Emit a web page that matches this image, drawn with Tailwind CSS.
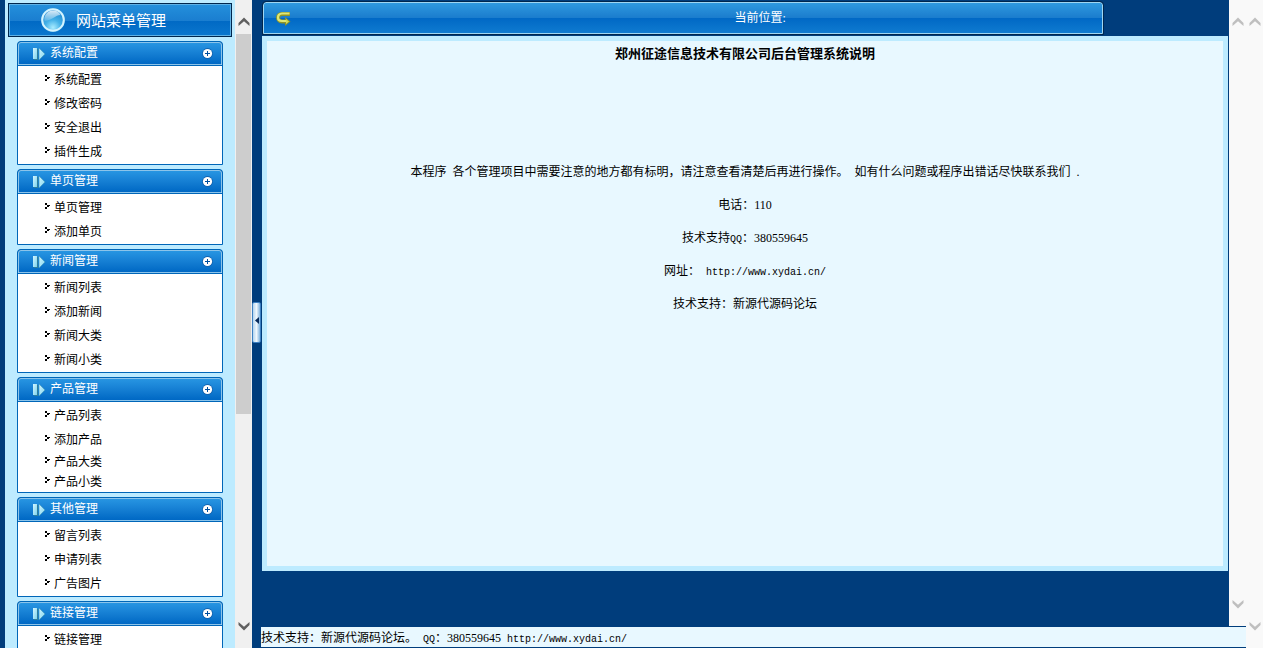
<!DOCTYPE html>
<html lang="zh-CN">
<head>
<meta charset="utf-8">
<meta name="viewport" content="width=device-width, initial-scale=1">
<title>网站菜单管理</title>
<script src="https://cdn.jsdelivr.net/npm/@tailwindcss/browser@4"></script>
</head>
<body class="flex h-screen overflow-hidden bg-[#003d7c] font-['Liberation_Serif','Noto_Sans_CJK_SC',serif] text-xs text-black">
<svg class="absolute size-0" aria-hidden="true">
  <defs>
    <linearGradient id="ice" x1="0" y1="0" x2="1" y2="1"><stop offset="0" stop-color="#d2f6ff"/><stop offset="1" stop-color="#7fd3ee"/></linearGradient>
    <radialGradient id="orb" cx=".5" cy=".85" r=".8"><stop offset="0" stop-color="#a9ecff"/><stop offset=".45" stop-color="#45b2e8"/><stop offset="1" stop-color="#1d86cf"/></radialGradient>
    <linearGradient id="shine" x1="0" y1="0" x2="0" y2="1"><stop offset="0" stop-color="#fff" stop-opacity=".85"/><stop offset="1" stop-color="#fff" stop-opacity=".15"/></linearGradient>
    <symbol id="play" viewBox="0 0 13 14"><path d="M1 2h4v11H1z" fill="#2f7f9c"/><path d="M0 1h4v11H0z" fill="url(#ice)"/><path d="M6 1v12l6-6z" fill="url(#ice)" stroke="#3f97b8" stroke-width=".6"/></symbol>
    <symbol id="plus" viewBox="0 0 11 11"><circle cx="5.500" cy="5.500" r="5.400" fill="#1262ae"/><circle cx="5.500" cy="5.500" r="4.600" fill="#fff"/><path d="M5 3h1v2h2v1H6v2H5V6H3V5h2z" fill="#004f9e"/></symbol>
    <symbol id="dot" viewBox="0 0 5 6"><path d="M0 0h2v2H0zM2 2h3v1H4v1H2zM0 4h2v2H0z" fill="#000"/></symbol>
    <symbol id="up" viewBox="0 0 12 9"><path d="M0.500 6 6 .5 11.500 6v3L6 4.200.5 9z" fill="currentColor"/></symbol>
    <symbol id="down" viewBox="0 0 12 9"><path d="M0.500 3 6 8.500 11.500 3V0L6 4.800.5 0z" fill="currentColor"/></symbol>
  </defs>
</svg>

<aside class="ml-[5px] flex w-[247px] shrink-0 bg-[#bdebff]">
  <div class="min-w-0 flex-1 overflow-hidden pt-[3px]">
    <h1 class="mx-[3px] flex h-[34px] items-center gap-[10px] border border-[#00264d] bg-[linear-gradient(#2490dc,#1a7ed0_52%,#0069c4_52%,#0b77ce)] pb-px pl-[31px] font-['Noto_Sans_CJK_SC',sans-serif] text-[15px] text-white outline-1 -outline-offset-2 outline-[#5fb0e4]">
      <svg class="size-[26px]" viewBox="0 0 26 26"><circle cx="13" cy="13" r="12" fill="#3b9fd9"/><circle cx="13" cy="13" r="10.800" fill="url(#orb)" stroke="#d4f4ff" stroke-width="2"/><path d="M4.500 14C3.500 8 8 3.500 13 3.500c4 0 6.500 2 7.500 4.500-5 0-8 5-16 6z" fill="url(#shine)"/></svg>
      网站菜单管理
    </h1>
    <nav class="mx-3 mt-1 flex flex-col gap-1">
      <section class="rounded-t-[4px] border border-[#0066b8] bg-white">
        <h2 class="flex h-[23px] items-center rounded-t-[3px] border border-[#8cc4ea] bg-linear-to-b from-[#2795e2] to-[#0068c4] pr-2 pl-[14px] text-white outline-1 outline-[#0066b8]"><svg class="mr-1 h-[14px] w-[13px]"><use href="#play"/></svg><span class="flex-1 pb-[2px]">系统配置</span><button aria-label="展开系统配置"><svg class="size-[11px]"><use href="#plus"/></svg></button></h2>
        <ul class="pt-[3px] *:flex *:h-6 *:items-center *:gap-[4px] *:pl-[27px]">
          <li><svg class="mb-1 h-[6px] w-[5px]"><use href="#dot"/></svg><a href="#">系统配置</a></li>
          <li><svg class="mb-1 h-[6px] w-[5px]"><use href="#dot"/></svg><a href="#">修改密码</a></li>
          <li><svg class="mb-1 h-[6px] w-[5px]"><use href="#dot"/></svg><a href="#">安全退出</a></li>
          <li><svg class="mb-1 h-[6px] w-[5px]"><use href="#dot"/></svg><a href="#">插件生成</a></li>
        </ul>
      </section>
      <section class="rounded-t-[4px] border border-[#0066b8] bg-white">
        <h2 class="flex h-[23px] items-center rounded-t-[3px] border border-[#8cc4ea] bg-linear-to-b from-[#2795e2] to-[#0068c4] pr-2 pl-[14px] text-white outline-1 outline-[#0066b8]"><svg class="mr-1 h-[14px] w-[13px]"><use href="#play"/></svg><span class="flex-1 pb-[2px]">单页管理</span><button aria-label="展开单页管理"><svg class="size-[11px]"><use href="#plus"/></svg></button></h2>
        <ul class="pt-[3px] *:flex *:h-6 *:items-center *:gap-[4px] *:pl-[27px]">
          <li><svg class="mb-1 h-[6px] w-[5px]"><use href="#dot"/></svg><a href="#">单页管理</a></li>
          <li><svg class="mb-1 h-[6px] w-[5px]"><use href="#dot"/></svg><a href="#">添加单页</a></li>
        </ul>
      </section>
      <section class="rounded-t-[4px] border border-[#0066b8] bg-white">
        <h2 class="flex h-[23px] items-center rounded-t-[3px] border border-[#8cc4ea] bg-linear-to-b from-[#2795e2] to-[#0068c4] pr-2 pl-[14px] text-white outline-1 outline-[#0066b8]"><svg class="mr-1 h-[14px] w-[13px]"><use href="#play"/></svg><span class="flex-1 pb-[2px]">新闻管理</span><button aria-label="展开新闻管理"><svg class="size-[11px]"><use href="#plus"/></svg></button></h2>
        <ul class="pt-[3px] *:flex *:h-6 *:items-center *:gap-[4px] *:pl-[27px]">
          <li><svg class="mb-1 h-[6px] w-[5px]"><use href="#dot"/></svg><a href="#">新闻列表</a></li>
          <li><svg class="mb-1 h-[6px] w-[5px]"><use href="#dot"/></svg><a href="#">添加新闻</a></li>
          <li><svg class="mb-1 h-[6px] w-[5px]"><use href="#dot"/></svg><a href="#">新闻大类</a></li>
          <li><svg class="mb-1 h-[6px] w-[5px]"><use href="#dot"/></svg><a href="#">新闻小类</a></li>
        </ul>
      </section>
      <section class="rounded-t-[4px] border border-[#0066b8] bg-white">
        <h2 class="flex h-[23px] items-center rounded-t-[3px] border border-[#8cc4ea] bg-linear-to-b from-[#2795e2] to-[#0068c4] pr-2 pl-[14px] text-white outline-1 outline-[#0066b8]"><svg class="mr-1 h-[14px] w-[13px]"><use href="#play"/></svg><span class="flex-1 pb-[2px]">产品管理</span><button aria-label="展开产品管理"><svg class="size-[11px]"><use href="#plus"/></svg></button></h2>
        <ul class="pt-[3px] *:flex *:items-center *:gap-[4px] *:pl-[27px]">
          <li class="h-6"><svg class="mb-1 h-[6px] w-[5px]"><use href="#dot"/></svg><a href="#">产品列表</a></li>
          <li class="h-6"><svg class="mb-1 h-[6px] w-[5px]"><use href="#dot"/></svg><a href="#">添加产品</a></li>
          <li class="h-5"><svg class="mb-1 h-[6px] w-[5px]"><use href="#dot"/></svg><a href="#">产品大类</a></li>
          <li class="h-5"><svg class="mb-1 h-[6px] w-[5px]"><use href="#dot"/></svg><a href="#">产品小类</a></li>
        </ul>
      </section>
      <section class="rounded-t-[4px] border border-[#0066b8] bg-white">
        <h2 class="flex h-[23px] items-center rounded-t-[3px] border border-[#8cc4ea] bg-linear-to-b from-[#2795e2] to-[#0068c4] pr-2 pl-[14px] text-white outline-1 outline-[#0066b8]"><svg class="mr-1 h-[14px] w-[13px]"><use href="#play"/></svg><span class="flex-1 pb-[2px]">其他管理</span><button aria-label="展开其他管理"><svg class="size-[11px]"><use href="#plus"/></svg></button></h2>
        <ul class="pt-[3px] *:flex *:h-6 *:items-center *:gap-[4px] *:pl-[27px]">
          <li><svg class="mb-1 h-[6px] w-[5px]"><use href="#dot"/></svg><a href="#">留言列表</a></li>
          <li><svg class="mb-1 h-[6px] w-[5px]"><use href="#dot"/></svg><a href="#">申请列表</a></li>
          <li><svg class="mb-1 h-[6px] w-[5px]"><use href="#dot"/></svg><a href="#">广告图片</a></li>
        </ul>
      </section>
      <section class="rounded-t-[4px] border border-[#0066b8] bg-white">
        <h2 class="flex h-[23px] items-center rounded-t-[3px] border border-[#8cc4ea] bg-linear-to-b from-[#2795e2] to-[#0068c4] pr-2 pl-[14px] text-white outline-1 outline-[#0066b8]"><svg class="mr-1 h-[14px] w-[13px]"><use href="#play"/></svg><span class="flex-1 pb-[2px]">链接管理</span><button aria-label="展开链接管理"><svg class="size-[11px]"><use href="#plus"/></svg></button></h2>
        <ul class="pt-[3px] *:flex *:h-6 *:items-center *:gap-[4px] *:pl-[27px]">
          <li><svg class="mb-1 h-[6px] w-[5px]"><use href="#dot"/></svg><a href="#">链接管理</a></li>
        </ul>
      </section>
    </nav>
  </div>
  <div class="flex w-[17px] flex-col items-center bg-[#f0f0f0] pt-[17px] text-[#606060]">
    <svg class="h-[9px] w-3 shrink-0"><use href="#up"/></svg>
    <div class="mt-2 flex w-full flex-1 flex-col px-px"><div class="h-[65%] bg-[#cdcdcd]"></div></div>
    <svg class="mt-1 mb-[17px] h-[9px] w-3 shrink-0"><use href="#down"/></svg>
  </div>
</aside>

<div class="flex w-[9px] shrink-0 flex-col justify-center">
  <button aria-label="收起菜单" class="mb-[3px] flex h-[41px] items-center justify-center rounded-[2px] border border-[#3c80c2] bg-linear-to-r from-[#b4d4ee] via-[#eef7fd] to-[#7fb2de]"><svg class="mb-1 h-[7px] w-1" viewBox="0 0 4 7"><path d="M4 0v7L0 3.500z" fill="#062a5c"/></svg></button>
</div>

<div class="flex min-w-0 flex-1 flex-col">
  <div class="flex min-h-0 flex-1">
    <main class="flex min-w-0 flex-1 flex-col px-px pt-[2px]">
      <header class="ml-px flex h-8 w-[87%] items-center rounded-t-[3px] border border-[#9fd6f2] bg-[linear-gradient(#2f99df,#1a7ccd_50%,#0068c5_50%,#0f7bd0)] pl-3 text-white outline-1 outline-[#00264d]">
        <svg class="size-[15px]" viewBox="0 0 15 15"><path d="M14 3H6C3 3 2 5 2 6.500S3 10.500 6 10.500h4" fill="none" stroke="#8f9428" stroke-width="4"/><path d="M9 6 14.500 10.500 9 15z" fill="#8f9428"/><path d="M13.500 2.500H6C3.200 2.500 2 4.500 2 6.500s1.300 3.500 4 3.500h5" fill="none" stroke="#dfe876" stroke-width="2.200"/><path d="M10 8 13 10.500 10 13z" fill="#d2dc58"/></svg>
        <span class="flex-1 pb-px pl-[127px] text-center">当前位置:</span>
      </header>
      <article class="mt-[2px] flex-1 border-[5px] border-[#bdebff] bg-[#e8f8ff] text-center leading-[33px]">
        <h2 class="mt-1 mb-[93px] text-[13px] leading-[18px] font-bold">郑州征途信息技术有限公司后台管理系统说明</h2>
        <div class="*:h-[33px]">
          <p>本程序 &nbsp;各个管理项目中需要注意的地方都有标明，请注意查看清楚后再进行操作。 &nbsp;如有什么问题或程序出错话尽快联系我们 &nbsp;.</p>
          <p>电话：110</p>
          <p>技术支持<span class="font-['Liberation_Mono',monospace] text-[10px] leading-none">QQ</span>：380559645</p>
          <p>网址： &nbsp;<a href="#" class="font-['Liberation_Mono',monospace] text-[10px] leading-none">http://www.xydai.cn/</a></p>
          <p>技术支持：新源代源码论坛</p>
        </div>
      </article>
      <div class="h-[55px] shrink-0"></div>
    </main>
    <div class="flex w-[17px] shrink-0 flex-col items-center justify-between bg-[#f9f9f9] py-[17px] text-[#bfbfbf]">
      <svg class="h-[9px] w-3"><use href="#up"/></svg>
      <svg class="h-[9px] w-3"><use href="#down"/></svg>
    </div>
  </div>
  <footer class="h-[22px] shrink-0 border-y border-[#003d7c] bg-[#e8f8ff] pt-px leading-5">技术支持：新源代源码论坛。 &nbsp;<span class="font-['Liberation_Mono',monospace] text-[10px] leading-none">QQ</span>：380559645 &nbsp;<a href="#" class="font-['Liberation_Mono',monospace] text-[10px] leading-none">http://www.xydai.cn/</a></footer>
</div>
<div class="flex w-[17px] shrink-0 flex-col items-center justify-between bg-[#f9f9f9] py-[17px] text-[#bfbfbf]">
  <svg class="h-[9px] w-3"><use href="#up"/></svg>
  <svg class="h-[9px] w-3"><use href="#down"/></svg>
</div>
</body>
</html>
